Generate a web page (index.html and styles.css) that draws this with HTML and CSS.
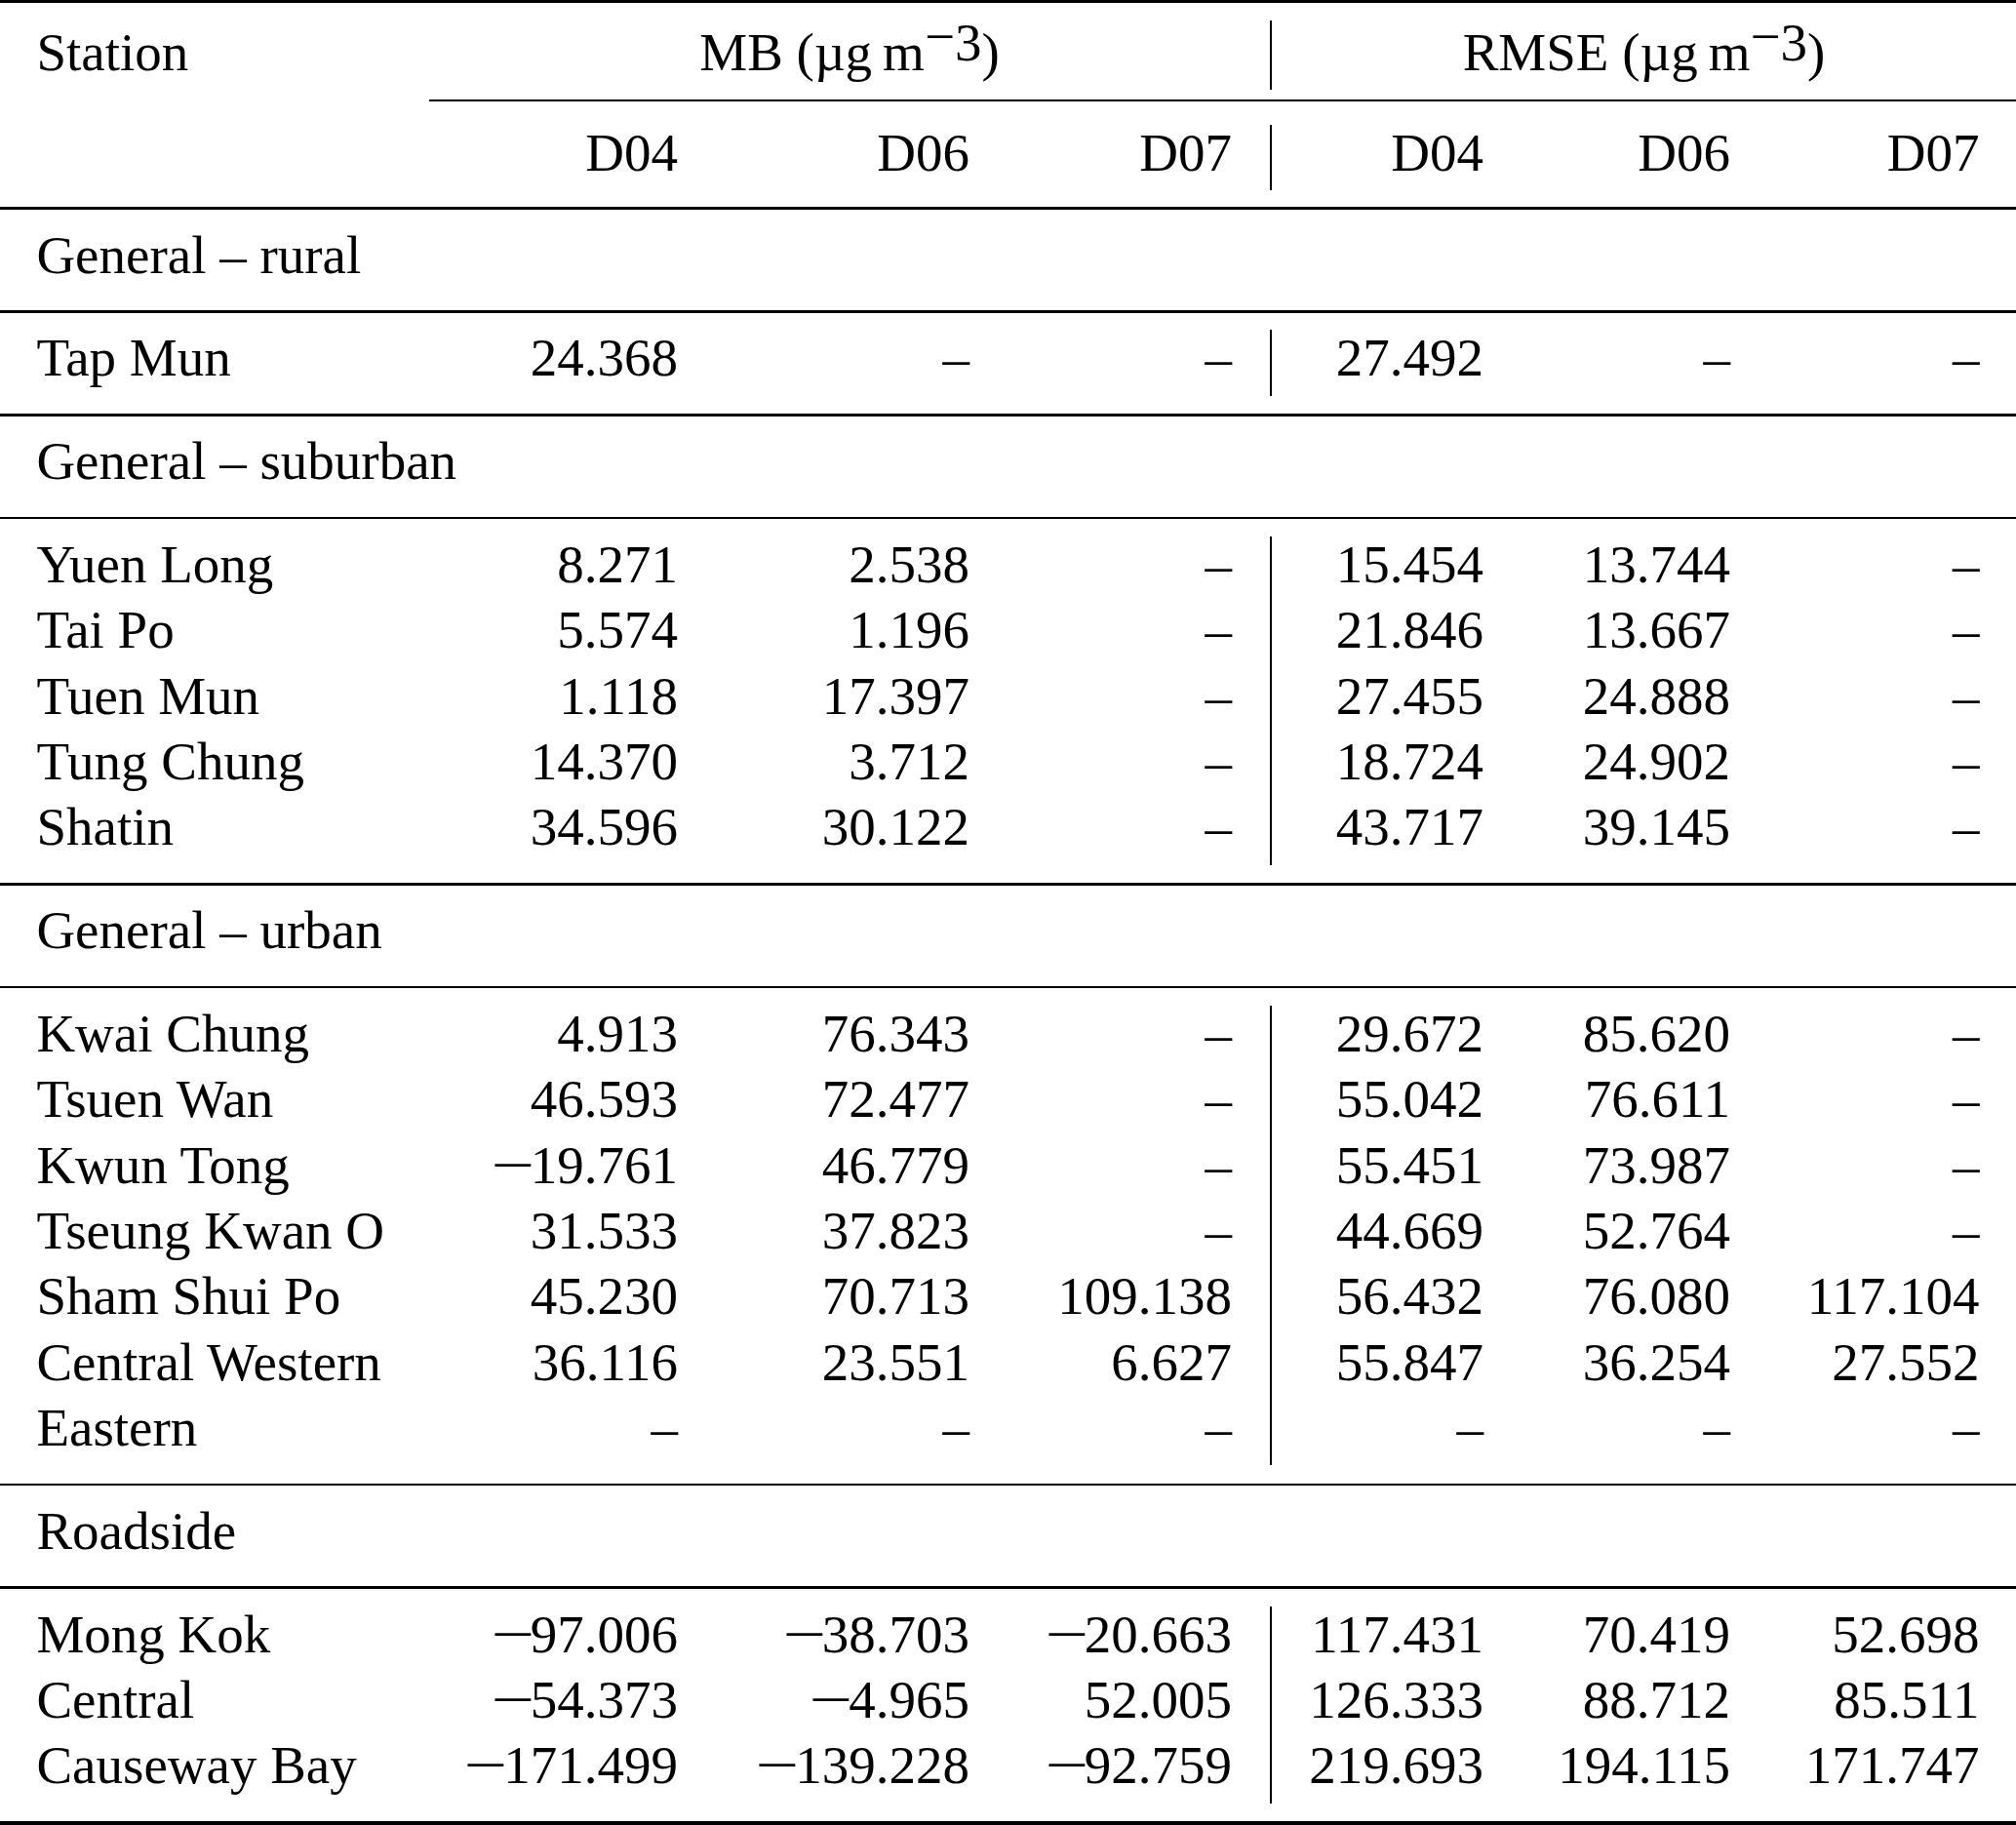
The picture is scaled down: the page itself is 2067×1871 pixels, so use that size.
FILE: index.html
```html
<!DOCTYPE html>
<html lang="en">
<head>
<meta charset="utf-8">
<title>MB and RMSE by station</title>
<link rel="stylesheet" href="styles.css">
</head>
<body>
<div class="tbl">
  <div class="rule heavy"></div>

  <div class="block head1">
    <div class="row">
      <div class="c1">Station</div>
      <div class="span-mb">MB (µg&thinsp;m<span class="sup"><span class="supminus">−</span>3</span>)</div>
      <div class="span-rmse">RMSE (µg&thinsp;m<span class="sup"><span class="supminus">−</span>3</span>)</div>
    </div>
  </div>

  <div class="cmid"><div class="cmid-line"></div></div>

  <div class="block head2">
    <div class="row">
      <div class="c1"></div>
      <div class="num c2">D04</div>
      <div class="num c3">D06</div>
      <div class="num c4">D07</div>
      <div class="num c5">D04</div>
      <div class="num c6">D06</div>
      <div class="num c7">D07</div>
    </div>
  </div>

  <div class="rule"></div>
  <div class="block"><div class="row group"><div class="c1">General – rural</div></div></div>
  <div class="rule"></div>

  <div class="block">
    <div class="row">
      <div class="c1">Tap Mun</div>
      <div class="num c2">24.368</div><div class="num c3">–</div><div class="num c4">–</div>
      <div class="num c5">27.492</div><div class="num c6">–</div><div class="num c7">–</div>
    </div>
  </div>

  <div class="rule"></div>
  <div class="block"><div class="row group"><div class="c1">General – suburban</div></div></div>
  <div class="rule"></div>

  <div class="block">
    <div class="row">
      <div class="c1">Yuen Long</div>
      <div class="num c2">8.271</div><div class="num c3">2.538</div><div class="num c4">–</div>
      <div class="num c5">15.454</div><div class="num c6">13.744</div><div class="num c7">–</div>
    </div>
    <div class="row">
      <div class="c1">Tai Po</div>
      <div class="num c2">5.574</div><div class="num c3">1.196</div><div class="num c4">–</div>
      <div class="num c5">21.846</div><div class="num c6">13.667</div><div class="num c7">–</div>
    </div>
    <div class="row">
      <div class="c1">Tuen Mun</div>
      <div class="num c2">1.118</div><div class="num c3">17.397</div><div class="num c4">–</div>
      <div class="num c5">27.455</div><div class="num c6">24.888</div><div class="num c7">–</div>
    </div>
    <div class="row">
      <div class="c1">Tung Chung</div>
      <div class="num c2">14.370</div><div class="num c3">3.712</div><div class="num c4">–</div>
      <div class="num c5">18.724</div><div class="num c6">24.902</div><div class="num c7">–</div>
    </div>
    <div class="row">
      <div class="c1">Shatin</div>
      <div class="num c2">34.596</div><div class="num c3">30.122</div><div class="num c4">–</div>
      <div class="num c5">43.717</div><div class="num c6">39.145</div><div class="num c7">–</div>
    </div>
  </div>

  <div class="rule"></div>
  <div class="block"><div class="row group"><div class="c1">General – urban</div></div></div>
  <div class="rule"></div>

  <div class="block">
    <div class="row">
      <div class="c1">Kwai Chung</div>
      <div class="num c2">4.913</div><div class="num c3">76.343</div><div class="num c4">–</div>
      <div class="num c5">29.672</div><div class="num c6">85.620</div><div class="num c7">–</div>
    </div>
    <div class="row">
      <div class="c1">Tsuen Wan</div>
      <div class="num c2">46.593</div><div class="num c3">72.477</div><div class="num c4">–</div>
      <div class="num c5">55.042</div><div class="num c6">76.611</div><div class="num c7">–</div>
    </div>
    <div class="row">
      <div class="c1">Kwun Tong</div>
      <div class="num c2"><span class="neg">−</span>19.761</div><div class="num c3">46.779</div><div class="num c4">–</div>
      <div class="num c5">55.451</div><div class="num c6">73.987</div><div class="num c7">–</div>
    </div>
    <div class="row">
      <div class="c1">Tseung Kwan O</div>
      <div class="num c2">31.533</div><div class="num c3">37.823</div><div class="num c4">–</div>
      <div class="num c5">44.669</div><div class="num c6">52.764</div><div class="num c7">–</div>
    </div>
    <div class="row">
      <div class="c1">Sham Shui Po</div>
      <div class="num c2">45.230</div><div class="num c3">70.713</div><div class="num c4">109.138</div>
      <div class="num c5">56.432</div><div class="num c6">76.080</div><div class="num c7">117.104</div>
    </div>
    <div class="row">
      <div class="c1">Central Western</div>
      <div class="num c2">36.116</div><div class="num c3">23.551</div><div class="num c4">6.627</div>
      <div class="num c5">55.847</div><div class="num c6">36.254</div><div class="num c7">27.552</div>
    </div>
    <div class="row">
      <div class="c1">Eastern</div>
      <div class="num c2">–</div><div class="num c3">–</div><div class="num c4">–</div>
      <div class="num c5">–</div><div class="num c6">–</div><div class="num c7">–</div>
    </div>
  </div>

  <div class="rule"></div>
  <div class="block"><div class="row group"><div class="c1">Roadside</div></div></div>
  <div class="rule"></div>

  <div class="block">
    <div class="row">
      <div class="c1">Mong Kok</div>
      <div class="num c2"><span class="neg">−</span>97.006</div><div class="num c3"><span class="neg">−</span>38.703</div><div class="num c4"><span class="neg">−</span>20.663</div>
      <div class="num c5">117.431</div><div class="num c6">70.419</div><div class="num c7">52.698</div>
    </div>
    <div class="row">
      <div class="c1">Central</div>
      <div class="num c2"><span class="neg">−</span>54.373</div><div class="num c3"><span class="neg">−</span>4.965</div><div class="num c4">52.005</div>
      <div class="num c5">126.333</div><div class="num c6">88.712</div><div class="num c7">85.511</div>
    </div>
    <div class="row">
      <div class="c1">Causeway Bay</div>
      <div class="num c2"><span class="neg">−</span>171.499</div><div class="num c3"><span class="neg">−</span>139.228</div><div class="num c4"><span class="neg">−</span>92.759</div>
      <div class="num c5">219.693</div><div class="num c6">194.115</div><div class="num c7">171.747</div>
    </div>
  </div>

  <div class="rule bottom"></div>
</div>
</body>
</html>
```

FILE: styles.css
```css
html, body {
  margin: 0;
  padding: 0;
  background: #ffffff;
}

body {
  color: #000000;
  font-family: "Liberation Serif", "Times New Roman", serif;
}

.tbl {
  width: 2067px;
  font-size: 55px;
  line-height: 1;
}

/* horizontal rules (booktabs style) */
.rule {
  height: 2.7px;
  background: #000000;
}

.rule.heavy {
  height: 3px;
}

.rule.bottom {
  height: 4.4px;
}

.cmid {
  display: grid;
  grid-template-columns: 440px 292px 299px 271px 256px 253px 256px;
}

.cmid-line {
  grid-column: 2 / -1;
  height: 2px;
  background: #000000;
}

/* row groups between rules */
.block {
  padding: 17.6px 0 18.2px;
}

.row {
  display: grid;
  grid-template-columns: 440px 292px 299px 271px 256px 253px 256px;
}

.row > div {
  box-sizing: border-box;
  height: 67.35px;
  line-height: 58px;
  padding: 0 37px;
  white-space: nowrap;
}

.row > .c1 {
  padding-left: 37.4px;
  padding-right: 0;
  text-align: left;
}

.row.group > .c1 {
  grid-column: 1 / -1;
}

.num {
  text-align: right;
}

.row > .c4 {
  padding-right: 39px;
}

.row > .c5 {
  border-left: 2px solid #000000;
}

.row > .c7 {
  padding-right: 37.5px;
}

/* header rows */
.head1 {
  padding: 17.7px 0 9.7px;
}

.head1 .row > div {
  height: 71.3px;
  line-height: 66.9px;
}

.head1 .span-mb {
  grid-column: 2 / 5;
  text-align: center;
}

.head1 .span-rmse {
  grid-column: 5 / 8;
  text-align: center;
  border-left: 2px solid #000000;
}

.head2 {
  padding: 24px 0 17.3px;
}

.head2 .row > div {
  height: 67.3px;
  line-height: 58.9px;
}

/* unit superscript */
.sup {
  vertical-align: 9.5px;
  line-height: 0;
}

.supminus {
  vertical-align: 6px;
  line-height: 0;
}

/* wide math-style minus */
.neg {
  display: inline-block;
  transform: scaleX(1.44);
  transform-origin: center;
  margin-right: 3px;
}
```
